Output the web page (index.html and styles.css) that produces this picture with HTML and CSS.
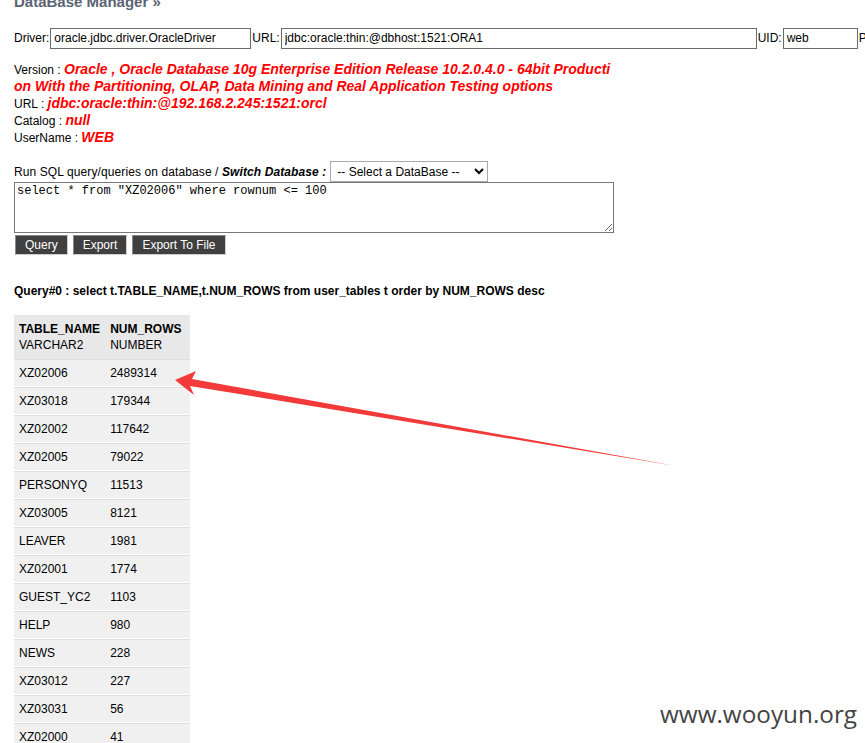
FILE: index.html
```html
<!DOCTYPE html>
<html>
<head>
<meta charset="utf-8">
<link rel="stylesheet" href="styles.css">
</head>
<body>
<div class="page">
  <h2 class="title">DataBase Manager &raquo;</h2>
  <div class="conn">
    <span>Driver:</span><input class="f-driver" value="oracle.jdbc.driver.OracleDriver">
    <span>URL:</span><input class="f-url" value="jdbc:oracle:thin:@dbhost:1521:ORA1">
    <span>UID:</span><input class="f-uid" value="web">
    <span>P</span>
  </div>
  <div class="info">
    <div>Version : <b>Oracle , Oracle Database 10g Enterprise Edition Release 10.2.0.4.0 - 64bit Producti<br>on With the Partitioning, OLAP, Data Mining and Real Application Testing options</b></div>
    <div>URL : <b>jdbc:oracle:thin:@192.168.2.245:1521:orcl</b></div>
    <div>Catalog : <b>null</b></div>
    <div>UserName : <b>WEB</b></div>
  </div>
  <div class="run">
    <span>Run SQL query/queries on database / <b>Switch Database :</b></span>
    <select class="dbsel"><option>-- Select a DataBase --</option></select>
  </div>
  <textarea class="sql">select * from "XZ02006" where rownum &lt;= 100</textarea>
  <div class="btns">
    <button>Query</button><button>Export</button><button>Export To File</button>
  </div>
  <div class="qtitle">Query#0 : select t.TABLE_NAME,t.NUM_ROWS from user_tables t order by NUM_ROWS desc</div>
  <table class="res">
    <thead>
      <tr><th><b>TABLE_NAME</b><br>VARCHAR2</th><th><b>NUM_ROWS</b><br>NUMBER</th></tr>
    </thead>
    <tbody>
      <tr><td>XZ02006</td><td>2489314</td></tr>
      <tr><td>XZ03018</td><td>179344</td></tr>
      <tr><td>XZ02002</td><td>117642</td></tr>
      <tr><td>XZ02005</td><td>79022</td></tr>
      <tr><td>PERSONYQ</td><td>11513</td></tr>
      <tr><td>XZ03005</td><td>8121</td></tr>
      <tr><td>LEAVER</td><td>1981</td></tr>
      <tr><td>XZ02001</td><td>1774</td></tr>
      <tr><td>GUEST_YC2</td><td>1103</td></tr>
      <tr><td>HELP</td><td>980</td></tr>
      <tr><td>NEWS</td><td>228</td></tr>
      <tr><td>XZ03012</td><td>227</td></tr>
      <tr><td>XZ03031</td><td>56</td></tr>
      <tr><td>XZ02000</td><td>41</td></tr>
    </tbody>
  </table>
</div>
<svg class="arrow" width="865" height="743" viewBox="0 0 865 743">
  <polygon points="175,380 196,371 192,379 676,466 190,386 194,395" fill="#f23a3a"/>
</svg>
<div class="wm">www.wooyun.org</div>
</body>
</html>
```
FILE: styles.css
```css
html, body { margin: 0; padding: 0; background: #fff; }
body { font-family: "Liberation Sans", Arial, sans-serif; font-size: 12px; color: #000; overflow: hidden; height: 743px; position: relative; }
.page { padding: 0 0 0 14px; }
.title { margin: -6px 0 0 0; font-size: 15px; font-weight: bold; color: #5a6474; line-height: 16px; }
.conn { display: flex; align-items: center; margin-top: 18px; height: 20px; white-space: nowrap; }
.conn span { flex-shrink: 0; }
.conn input { flex-shrink: 0; height: 21px; box-sizing: border-box; border: 1px solid #6b6b6b; font-family: "Liberation Sans", Arial, sans-serif; font-size: 12px; padding: 0 3px; margin: 0 1px 0 1px; background: #fff; color: #000; }
.f-driver { width: 201px; }
.f-url { width: 476px; }
.f-uid { width: 75px; }
.info { margin-top: 14px; line-height: 17px; }
.info b { color: #f00; font-style: italic; font-size: 14px; font-weight: bold; line-height: 15px; }
.run { display: flex; align-items: center; margin-top: 14px; height: 21px; letter-spacing: 0.1px; }
.run b { font-style: italic; }
.dbsel { margin-left: 4px; height: 21px; width: 158px; border: 1px solid #aaa; font-family: "Liberation Sans", Arial, sans-serif; font-size: 12px; background: #fff; color: #000; padding: 0 2px; letter-spacing: 0; }
.sql { display: block; box-sizing: border-box; width: 600px; height: 51px; margin: 0; border: 1px solid #777; font-family: "Liberation Mono", "Courier New", monospace; font-size: 12px; padding: 1px 2px; resize: both; }
.btns { display: flex; gap: 5px; margin-top: 2px; padding-left: 1px; }
.btns button { height: 20px; background: #404040; color: #fff; border: 1px solid #8a8a8a; border-right-color: #cfcfcf; border-bottom-color: #cfcfcf; font-family: "Liberation Sans", Arial, sans-serif; font-size: 12px; padding: 0 9px; }
.qtitle { margin-top: 29px; font-weight: bold; line-height: 14px; }
.res { margin-top: 17px; border-collapse: separate; border-spacing: 0; width: 176px; }
.res th { background: #e8e8e8; text-align: left; font-weight: normal; padding: 6px 5px 0; line-height: 16px; vertical-align: top; height: 44px; box-sizing: border-box; }
.res th:first-child { width: 81px; }
.res td { background: #f0f0f0; padding: 0 5px; height: 26px; border-top: 1px solid #dedede; border-bottom: 1px solid #fff; line-height: 14px; }
.arrow { position: absolute; left: 0; top: 0; pointer-events: none; }
.wm { position: absolute; left: 660px; top: 697px; font-family: "Open Sans", "DejaVu Sans", sans-serif; font-size: 24.3px; color: #444; }
```
